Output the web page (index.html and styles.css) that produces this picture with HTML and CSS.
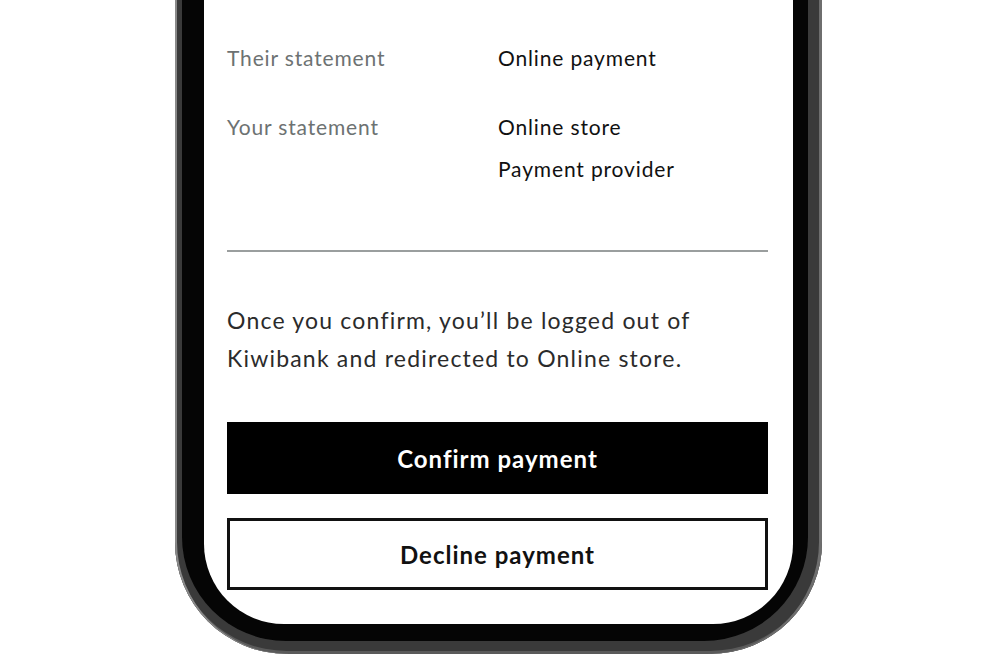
FILE: index.html
```html
<!DOCTYPE html>
<html lang="en">
<head>
    <meta charset="UTF-8">
    <meta name="viewport" content="width=device-width, initial-scale=1.0">
    <title>Confirm payment</title>
    <link rel="stylesheet" href="styles.css">
</head>
<body>

    <div class="phone">
        <div class="bezel">
            <div class="screen">

                <!-- Payment details -->
                <dl class="details">
                    <dt>Their statement</dt>
                    <dd>Online payment</dd>

                    <dt>Your statement</dt>
                    <dd>Online store<br>Payment provider</dd>
                </dl>

                <hr class="divider">

                <p class="note">Once you confirm, you’ll be logged out of Kiwibank and redirected to Online store.</p>

                <div class="actions">
                    <button class="btn btn-primary" type="button">Confirm payment</button>
                    <button class="btn btn-secondary" type="button">Decline payment</button>
                </div>

            </div>
        </div>
    </div>

</body>
</html>
```

FILE: styles.css
```css
body {
    margin: 0;
    background: #fff;
    font-family: Lato, "Liberation Sans", sans-serif;
}
.phone {
    box-sizing: border-box;
    width: 647px;
    height: 654px;
    margin-left: 175px;
    padding: 0 14px 13px 7px;
    background: #3a3a3a;
    border-radius: 0 0 112px 112px;
    box-shadow: inset 2px 0 0 #8a8a8a, inset -3px 0 0 #6e6e6e, inset 0 -3px 0 #5a5a5a;
}
.bezel {
    box-sizing: border-box;
    height: 100%;
    padding: 0 15px 17px 22px;
    background: #050505;
    border-radius: 0 0 104px 104px;
}
.screen {
    box-sizing: border-box;
    height: 100%;
    padding: 37px 25px 0 23px;
    background: #fff;
    border-radius: 0 0 80px 80px;
    overflow: hidden;
}
.details {
    display: grid;
    grid-template-columns: 271px 1fr;
    row-gap: 27px;
    margin: 0;
    font-size: 21px;
    line-height: 42px;
    letter-spacing: 0.85px;
}
.details dt {
    color: #6d7272;
}
.details dd {
    margin: 0;
    color: #111;
}
.divider {
    height: 2px;
    margin: 60px 0 0;
    border: none;
    background: #9a9e9e;
}
.note {
    margin: 49px 0 0;
    font-size: 23px;
    line-height: 38px;
    letter-spacing: 1.2px;
    color: #2b2b2b;
}
.actions {
    display: flex;
    flex-direction: column;
    gap: 24px;
    margin-top: 45px;
}
.btn {
    box-sizing: border-box;
    height: 72px;
    width: 100%;
    font-family: inherit;
    font-size: 24px;
    font-weight: 700;
    letter-spacing: 1px;
    cursor: pointer;
}
.btn-primary {
    background: #000;
    color: #fff;
    border: none;
}
.btn-secondary {
    background: #fff;
    color: #111;
    border: 3px solid #111;
}
```
